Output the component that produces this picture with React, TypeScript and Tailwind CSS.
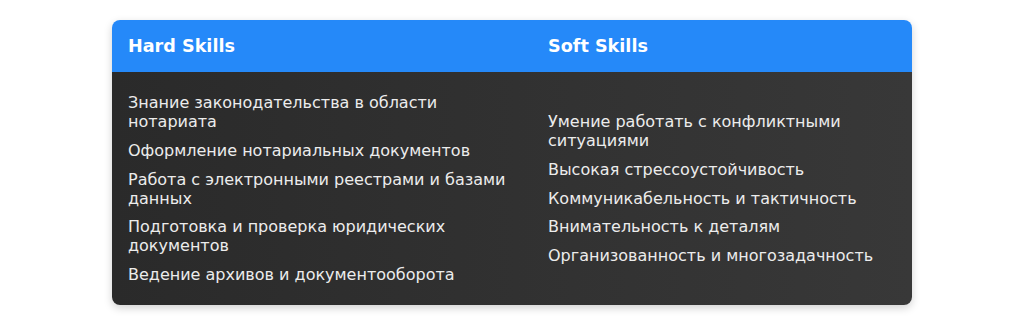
import React from "react";

const hard = [
  "Знание законодательства в области нотариата",
  "Оформление нотариальных документов",
  "Работа с электронными реестрами и базами данных",
  "Подготовка и проверка юридических документов",
  "Ведение архивов и документооборота",
];

const soft = [
  "Умение работать с конфликтными ситуациями",
  "Высокая стрессоустойчивость",
  "Коммуникабельность и тактичность",
  "Внимательность к деталям",
  "Организованность и многозадачность",
];

export default function App() {
  return (
    <div
      className="w-[1024px] h-[326px] bg-white pt-5 px-[112px]"
      style={{ fontFamily: '"DejaVu Sans", sans-serif' }}
    >
      <div className="w-[800px] rounded-lg overflow-hidden shadow-[0_3px_8px_rgba(0,0,0,0.18)]">
        <div className="grid grid-cols-[420px_380px] h-[52px] bg-[#2589f9] text-white font-bold text-[17.6px] items-center">
          <div className="pl-4">Hard Skills</div>
          <div className="pl-4">Soft Skills</div>
        </div>
        <div className="grid grid-cols-[420px_380px] h-[233px] bg-gradient-to-r from-[#2a2a2a] to-[#383838] text-[#ececec] text-[16px] leading-[19px]">
          <div className="flex flex-col justify-center gap-[9.8px] px-4">
            {hard.map((t) => (
              <div key={t}>{t}</div>
            ))}
          </div>
          <div className="flex flex-col justify-center gap-[9.8px] px-4">
            {soft.map((t) => (
              <div key={t}>{t}</div>
            ))}
          </div>
        </div>
      </div>
    </div>
  );
}
